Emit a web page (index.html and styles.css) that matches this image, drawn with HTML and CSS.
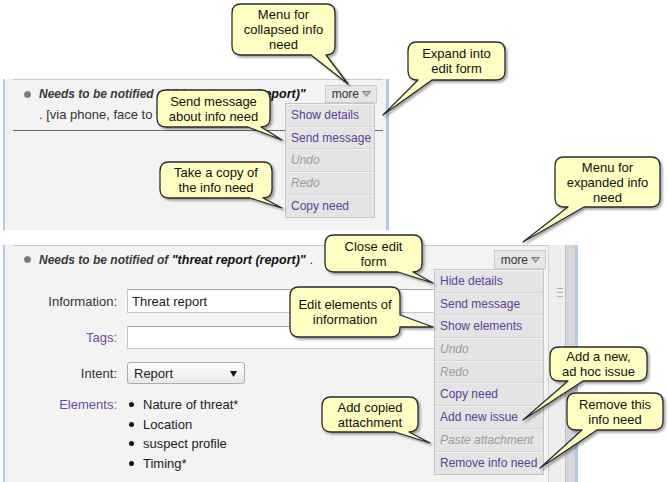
FILE: index.html
```html
<!DOCTYPE html>
<html lang="en">
<head>
<meta charset="utf-8">
<title>Info need menus</title>
<link rel="stylesheet" href="styles.css">
</head>
<body>
<div class="page">

  <section class="shot shot-collapsed">
    <div class="panel">
      <div class="need-head need-head-collapsed">
        <span class="dot"></span>
        <div class="need-title">
          <div><span class="lead">Needs to be notified of </span><span class="subject">"threat report (report)"</span></div>
          <div class="title-line2">. [via phone, face to face]</div>
        </div>
        <div class="more-wrap">
          <div class="more">more <svg class="tri" width="9" height="6" viewBox="0 0 9 6"><polygon points="0.5,0.5 8.5,0.5 4.5,5.5" fill="#b9b9b9" stroke="#7d7d7d" stroke-width="1"/></svg></div>
          <ul class="menu menu-short">
            <li>Show details</li>
            <li>Send message</li>
            <li class="off">Undo</li>
            <li class="off">Redo</li>
            <li>Copy need</li>
          </ul>
        </div>
      </div>
    </div>
    <div class="side-strip"></div>
  </section>

  <section class="shot shot-expanded">
    <div class="panel">
      <div class="need-head need-head-expanded">
        <span class="dot"></span>
        <div class="need-title">
          <span class="lead">Needs to be notified of </span><span class="subject">"threat report (report)"</span> .
        </div>
        <div class="more-wrap">
          <div class="more more-tall">more <svg class="tri" width="9" height="6" viewBox="0 0 9 6"><polygon points="0.5,0.5 8.5,0.5 4.5,5.5" fill="#b9b9b9" stroke="#7d7d7d" stroke-width="1"/></svg></div>
          <ul class="menu menu-long">
            <li>Hide details</li>
            <li>Send message</li>
            <li>Show elements</li>
            <li class="off">Undo</li>
            <li class="off">Redo</li>
            <li>Copy need</li>
            <li>Add new issue</li>
            <li class="off">Paste attachment</li>
            <li>Remove info need</li>
          </ul>
        </div>
      </div>
      <div class="need-form">
        <div class="label">Information:</div>
        <div class="field">Threat report</div>
        <div class="label label-link">Tags:</div>
        <div class="field field-tags"></div>
        <div class="label">Intent:</div>
        <div class="select"><span>Report</span><svg width="7" height="7" viewBox="0 0 7 7"><polygon points="0,1 7,1 3.5,7" fill="#111"/></svg></div>
        <div class="label label-link label-top">Elements:</div>
        <ul class="elements">
          <li>Nature of threat*</li>
          <li>Location</li>
          <li>suspect profile</li>
          <li>Timing*</li>
        </ul>
      </div>
    </div>
    <div class="scrollbar"><svg width="6" height="9" viewBox="0 0 6 9"><path d="M0 0.5H6M0 4.5H6M0 8.5H6" stroke="#b3b3b3" stroke-width="1"/></svg></div>
    <div class="gutter"></div>
  </section>

  <svg class="bubbles" width="668" height="482" viewBox="0 0 668 482">
    <g fill="#ffffc4" stroke="#2a2a2a" stroke-width="1.3" stroke-linejoin="round">
      <path d="M241 4 H326 Q335 4 335 13 V46 Q335 55 326 55 L348 84 L311 55 H241 Q232 55 232 46 V13 Q232 4 241 4 Z"/>
      <path d="M417 42 H496 Q505 42 505 51 V71 Q505 80 496 80 H432 L383 115 L418 80 H417 Q408 80 408 71 V51 Q408 42 417 42 Z"/>
      <path d="M166 90 H261 Q270 90 270 99 V118 Q270 127 261 127 L282 140 L248 127 H166 Q157 127 157 118 V99 Q157 90 166 90 Z"/>
      <path d="M169 162 H263 Q272 162 272 171 V189 Q272 198 263 198 L282 208 L250 198 H169 Q160 198 160 189 V171 Q160 162 169 162 Z"/>
      <path d="M564 157 H651 Q660 157 660 166 V198 Q660 207 651 207 H584 L523 242 L568 207 H564 Q555 207 555 198 V166 Q555 157 564 157 Z"/>
      <path d="M334 235 H413 Q422 235 422 244 V263 Q422 272 413 272 L433 283 L398 272 H334 Q325 272 325 263 V244 Q325 235 334 235 Z"/>
      <path d="M299 287 H391 Q400 287 400 296 V315 L433 327 L400 327 V328 Q400 337 391 337 H299 Q290 337 290 328 V296 Q290 287 299 287 Z"/>
      <path d="M331 397 H409 Q418 397 418 406 V423 Q418 432 409 432 L430 443 L395 432 H331 Q322 432 322 423 V406 Q322 397 331 397 Z"/>
      <path d="M559 347 H638 Q647 347 647 356 V372 Q647 381 638 381 H583 L523 420 L568 381 H559 Q550 381 550 372 V356 Q550 347 559 347 Z"/>
      <path d="M576 393 H654 Q663 393 663 402 V421 Q663 430 654 430 H597 L540 468 L582 430 H576 Q567 430 567 421 V402 Q567 393 576 393 Z"/>
    </g>
  </svg>

  <div class="note note-1">Menu for<br>collapsed info<br>need</div>
  <div class="note note-2">Expand into<br>edit form</div>
  <div class="note note-3">Send message<br>about info need</div>
  <div class="note note-4">Take a copy of<br>the info need</div>
  <div class="note note-5">Menu for<br>expanded info<br>need</div>
  <div class="note note-6">Close edit<br>form</div>
  <div class="note note-7">Edit elements of<br>information</div>
  <div class="note note-8">Add copied<br>attachment</div>
  <div class="note note-9">Add a new,<br>ad hoc issue</div>
  <div class="note note-10">Remove this<br>info need</div>
</div>
</body>
</html>
```

FILE: styles.css
```css
* { box-sizing: border-box; }

html, body {
  margin: 0;
  padding: 0;
  background: #ffffff;
}

body {
  font-family: "Liberation Sans", Arial, sans-serif;
  font-size: 13px;
  color: #333333;
}

.page {
  position: relative;
  width: 668px;
  height: 482px;
  overflow: hidden;
  padding-top: 79px;
}

/* ---------- screenshot frames ---------- */
.shot {
  display: flex;
  margin-left: 3px;
  border-left: 2px solid #b1c9ea;
  border-right: 3px solid #b1c9ea;
  background: #f3f3f3;
  padding-left: 8px;
}

.shot-collapsed {
  width: 386px;
  height: 151px;
}

.shot-expanded {
  width: 575px;
  height: 237px;
  margin-top: 15px;
  overflow: hidden;
}

.panel {
  flex: none;
  border-top: 1px solid #c9c9c9;
}

.shot-collapsed .panel { width: 370px; }
.shot-expanded .panel { width: 535px; }

.side-strip {
  flex: 1;
}

.scrollbar {
  width: 17px;
  flex: none;
  background: #eeeeee;
  border-left: 1px solid #d4d4d4;
  padding: 43px 0 0 8px;
}

.scrollbar svg { display: block; }

.gutter {
  width: 10px;
  flex: none;
  background: #d6d6d6;
  border-left: 1px solid #c3c3c3;
}

/* ---------- need header ---------- */
.need-head {
  display: flex;
  align-items: flex-start;
}

.need-head-collapsed {
  height: 51px;
  padding: 5px 6px 0 11px;
  border-bottom: 1px solid #686868;
}

.need-head-expanded {
  padding: 4px 2px 0 11px;
}

.dot {
  flex: none;
  width: 7px;
  height: 7px;
  margin-top: 6px;
  border-radius: 50%;
  background: radial-gradient(circle, #7a7a7a 45%, #a9a9a9 100%);
}

.need-title {
  flex: 1;
  margin-left: 8px;
  line-height: 18px;
  color: #333333;
}

.need-head-expanded .need-title { line-height: 19px; }

.lead {
  font-style: italic;
  font-weight: bold;
  font-size: 12px;
  color: #3a3a3a;
}

.subject {
  font-style: italic;
  font-weight: bold;
  font-size: 12.5px;
  color: #111111;
}

.title-line2 {
  margin-top: 3px;
}

/* ---------- more button + menu ---------- */
.more-wrap {
  position: relative;
  flex: none;
}

.more {
  display: flex;
  align-items: center;
  gap: 3px;
  height: 18px;
  padding: 0 5px 0 6px;
  border: 1px solid #cdcdcd;
  background: #e6e6e6;
  font-size: 12px;
  color: #333333;
}

.more-tall { height: 19px; }

.tri { display: block; }

.menu {
  position: absolute;
  top: 100%;
  right: 2px;
  margin: 0;
  padding: 0;
  list-style: none;
  background: #e4e4e4;
  border: 1px solid #c6c6c6;
  font-size: 12px;
  z-index: 2;
}

.menu-short { width: 90px; }
.menu-long { width: 110px; }

.menu li {
  height: 22.7px;
  line-height: 22px;
  padding: 0 5px;
  border-bottom: 1px solid #d3d3d3;
  box-shadow: inset 0 1px 0 #f3f3f3;
  color: #5c409c;
  white-space: nowrap;
}

.menu li:last-child { border-bottom: none; }

.menu li.off {
  color: #9c9c9c;
  font-style: italic;
}

/* ---------- form ---------- */
.need-form {
  display: grid;
  grid-template-columns: 104px 413px;
  column-gap: 10px;
  row-gap: 13px;
  align-items: center;
  margin-top: 19px;
}

.label {
  text-align: right;
  color: #333333;
}

.label-link { color: #6a4b9f; }

.label-top {
  align-self: start;
  line-height: 19.5px;
  margin-top: -2px;
}

.field {
  height: 24px;
  display: flex;
  align-items: center;
  padding: 0 4px;
  background: #ffffff;
  border: 1px solid #c6c6c6;
  border-top-color: #a8a8a8;
  color: #222222;
}

.field-tags { height: 23px; }

.select {
  width: 118px;
  height: 22px;
  display: flex;
  align-items: center;
  justify-content: space-between;
  padding: 0 7px 0 6px;
  border: 1px solid #acacac;
  border-radius: 3px;
  background: linear-gradient(#fefefe, #e8e8e8);
  color: #222222;
}

.select svg { display: block; }

.elements {
  margin: -2px 0 0;
  padding: 0;
  list-style: none;
  line-height: 19.5px;
  color: #222222;
  align-self: start;
}

.elements li {
  display: flex;
  align-items: center;
}

.elements li::before {
  content: "";
  width: 5px;
  height: 5px;
  margin: 0 9px 0 2px;
  border-radius: 50%;
  background: #111111;
}

/* ---------- callouts ---------- */
.bubbles {
  position: absolute;
  top: 0;
  left: 0;
  z-index: 5;
  filter: drop-shadow(2px 2px 1px rgba(0, 0, 0, 0.35));
}

.note {
  position: absolute;
  z-index: 6;
  display: flex;
  align-items: center;
  justify-content: center;
  text-align: center;
  font-size: 13px;
  line-height: 15px;
  color: #111111;
}

.note-1 { left: 232px; top: 4px; width: 103px; height: 51px; }
.note-2 { left: 408px; top: 42px; width: 97px; height: 38px; }
.note-3 { left: 157px; top: 90px; width: 113px; height: 37px; }
.note-4 { left: 160px; top: 162px; width: 112px; height: 36px; }
.note-5 { left: 555px; top: 157px; width: 105px; height: 50px; }
.note-6 { left: 325px; top: 235px; width: 97px; height: 37px; }
.note-7 { left: 290px; top: 287px; width: 110px; height: 50px; }
.note-8 { left: 322px; top: 397px; width: 96px; height: 35px; }
.note-9 { left: 550px; top: 347px; width: 97px; height: 34px; }
.note-10 { left: 567px; top: 393px; width: 96px; height: 37px; }
```
